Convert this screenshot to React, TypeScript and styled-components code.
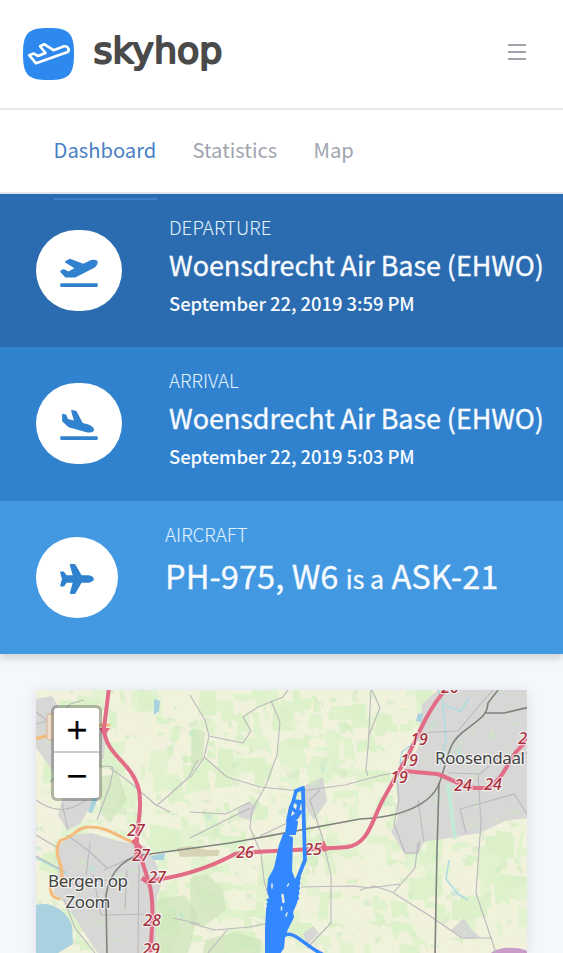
import React from "react";
import styled, { createGlobalStyle } from "styled-components";
import { FaPlane, FaPlaneArrival, FaPlaneDeparture } from "react-icons/fa";

const GlobalStyle = createGlobalStyle`
  * { box-sizing: border-box; }
  html, body { margin: 0; padding: 0; }
  body {
    background: #f4f7fc;
    font-family: "Noto Sans CJK SC", "Noto Sans", sans-serif;
    overflow: hidden;
  }
`;

const Page = styled.div`
  display: flex;
  flex-direction: column;
  height: 953px;
  overflow: hidden;
`;

const Header = styled.header`
  display: flex;
  flex: none;
  align-items: center;
  justify-content: space-between;
  height: 110px;
  padding: 0 37px 0 23px;
  background: #fff;
  border-bottom: 2px solid #e4e9f0;
`;

const Brand = styled.a`
  display: flex;
  svg { display: block; overflow: visible; }
`;

const MenuButton = styled.button`
  display: flex;
  flex-direction: column;
  gap: 5px;
  width: 18px;
  padding: 0;
  margin-top: -4px;
  border: 0;
  background: none;
`;

const MenuBar = styled.span`
  height: 2px;
  background: #9fa4ad;
`;

const Tabs = styled.nav`
  position: relative;
  display: flex;
  flex: none;
  gap: 36px;
  height: 84px;
  padding: 0 54px;
  background: #fff;
  border-bottom: 2px solid #dfe6ef;
  z-index: 1;
`;

const Tab = styled.a<{ $active?: boolean; $width: number }>`
  flex: none;
  width: ${(p) => p.$width}px;
  height: 90px;
  padding-top: 24px;
  font-size: 20.2px;
  line-height: 32px;
  white-space: nowrap;
  text-indent: -0.5px;
  color: ${(p) => (p.$active ? "#4a80c6" : "#a0a5af")};
  border-bottom: 2px solid ${(p) => (p.$active ? "#427fcd" : "transparent")};
`;

const Summary = styled.section`
  flex: none;
  box-shadow: 0 4px 8px rgba(0, 0, 0, 0.16);
`;

const Leg = styled.article<{ $bg: string; $h: number }>`
  display: flex;
  gap: 47px;
  height: ${(p) => p.$h}px;
  padding-left: 36px;
  background: ${(p) => p.$bg};
`;

const IconDisc = styled.div<{ $w: number; $icon: number }>`
  display: flex;
  flex: none;
  align-items: center;
  justify-content: center;
  width: ${(p) => p.$w}px;
  height: 81px;
  margin-top: 36px;
  padding-top: 2px;
  border-radius: 999px;
  background: #fff;
  color: #3182ce;
  svg { display: block; flex: none; height: 30px; width: ${(p) => p.$icon}px; }
`;

const Details = styled.div`
  display: flex;
  flex-direction: column;
  padding-top: 19px;
  color: #f7fbff;
  white-space: nowrap;
`;

const Kicker = styled.div`
  font-size: 18.8px;
  font-weight: 300;
  line-height: 28px;
  color: #e3f3ff;
`;

const Place = styled.div`
  font-size: 27px;
  line-height: 36px;
  margin-top: 6px;
  letter-spacing: -0.07px;
  -webkit-text-stroke: 0.35px currentColor;
`;

const When = styled.div`
  font-size: 18.5px;
  font-weight: 500;
  line-height: 28px;
  margin-top: 6px;
  letter-spacing: -0.07px;
`;

const Craft = styled.div`
  font-size: 32.7px;
  line-height: 48px;
  margin-top: 3px;
  -webkit-text-stroke: 0.3px currentColor;
  small { font-size: 25px; }
`;

const MapCard = styled.section`
  position: relative;
  flex: none;
  width: 491px;
  height: 263px;
  margin: 36px 0 0 36px;
  box-shadow: 0 2px 14px rgba(0, 0, 0, 0.1);
  svg { display: block; }
`;

const ZoomControl = styled.div`
  position: absolute;
  left: 15px;
  top: 15px;
  width: 51px;
  border: 3px solid rgba(0, 0, 0, 0.25);
  border-radius: 6px;
  background: #fff;
  background-clip: padding-box;
`;

const ZoomButton = styled.button`
  display: block;
  width: 45px;
  height: 45px;
  padding: 0 0 0 1px;
  border: 0;
  background: none;
  color: #000;
  font: 28px/43px "DejaVu Sans", sans-serif;
  text-align: center;
  -webkit-text-stroke: 0.3px #000;
  &:first-child { border-bottom: 2px solid #ccc; }
`;

const Logo = () => (
  <svg width="204" height="60" viewBox="23 24 204 60">
    <path d="M48.5 28C69 28 74 33 74 54S69 80 48.500 80 23 75 23 54 28 28 48.500 28Z" fill="#2e89ef" />
    <path
      d="M29.200 55.200L33.800 53.600L38 56L45.500 53L40 46.300L44.500 44.300L53.500 50.200L64 46.300C68 45.500 70.500 50.500 67 52.300L36 63.300Z"
      fill="none"
      stroke="#fff"
      strokeWidth="2.600"
      strokeLinejoin="round"
    />
    <text
      x="93.500"
      y="63"
      textLength="129"
      lengthAdjust="spacingAndGlyphs"
      fontFamily="DejaVu Sans, sans-serif"
      fontSize="35"
      fill="#4a4a4a"
      stroke="#4a4a4a"
      strokeWidth="2"
      strokeLinejoin="round"
    >
      skyhop
    </text>
  </svg>
);

const random = (seed: number) => () => {
  seed = (seed * 16807) % 2147483647;
  return seed / 2147483647;
};

const fieldColors = ["#dcf3ca", "#e0f3ce", "#daf0c8", "#f0f2dc", "#e2f3d0", "#f3f1de"];

const makeParcels = (count: number, seed: number, size: number) => {
  const next = random(seed);
  return Array.from({ length: count }, () => {
    const x = 30 + next() * 491;
    const y = 682 + next() * 263;
    const w = 3 + next() * size;
    const h = 3 + next() * size * 0.9;
    const s = next() * 8 - 2;
    return {
      d: `M${x} ${y}l${w} ${s}l${s} ${h}l${-w * 0.5} ${-s * 1.5}l${-w * 0.6} ${s}Z`,
      fill: fieldColors[Math.floor(next() * fieldColors.length)],
    };
  });
};

const parcels = makeParcels(620, 4127, 24);
const parks = makeParcels(170, 917, 5);

const urban = [
  "M36 699L52 696L64 716L88 728L106 733L104 757L95 772L84 785L94 800L80 824L67 830L58 815L66 788L36 748Z",
  "M57 848L70 835L92 833L114 840L145 846L156 863L162 881L156 900L156 953L98 953L80 926L65 903L53 893L58 872Z",
  "M422 704L438 690L527 690L527 818L505 821L480 833L424 842L418 854L404 853L391 832L398 818L397 782L407 765L418 748Z",
  "M300 788L323 777L327 801L314 820L304 805Z",
  "M238 810L249 802L257 806L250 820L239 817Z",
  "M303 934L313 926L319 933L307 945Z",
  "M451 930L464 918L470 928L480 937L466 939Z",
];

const water = [
  "M36 905C50 901 67 910 72 926L73 944L58 953L36 953Z",
  "M154 699L160 701L159 711L154 715Z",
  "M88 812L94 795L98 798L92 813Z",
  "M418 713L423 714L421 722L416 721Z",
  "M151 856L165 853L164 860L153 860Z",
  "M60 780L67 775L67 784L61 785Z",
];

const woods = [
  "M190 878L207 874L223 889L226 910L202 928L190 920Z",
  "M154 900L185 895L198 915L188 953L157 953Z",
  "M205 940L235 932L262 940L260 953L203 953Z",
  "M192 728L205 732L203 760L191 770Z",
  "M101 777L118 773L127 800L110 823L100 813Z",
];

const lanes = [
  "M36 712L60 730M68 830L62 803M36 835L58 848M36 800C50 810 66 815 86 800",
  "M100 767C120 764 112 770 110 785L97 820M110 768L127 780L156 805L170 812M156 806L168 796L188 778L198 760",
  "M190 695L205 720L209 736L204 758L190 778M209 736L243 743L251 731L243 717L258 707L283 697L288 690",
  "M271 701L280 722L277 755L266 785L252 810L250 828L261 853L264 880L268 895",
  "M204 757L227 777L260 787L300 791L345 785L378 776L410 770",
  "M190 812L226 814L250 802M190 838L250 808M260 836L300 817",
  "M320 790L310 800L322 836L331 875L331 923L307 948M301 887L354 886L370 888L400 884",
  "M190 923L215 930L250 927L268 923M227 930L208 953",
  "M360 890L374 886L392 892L430 916L462 938L492 938",
  "M394 892L415 868L418 842M478 773L481 822L476 893L485 920L496 953",
  "M372 690L380 708L369 735L366 770L368 776M368 750L371 690",
  "M397 780L399 800L394 824L405 853L418 853L420 841",
  "M420 733L458 731L484 700L493 690M449 773L480 774L498 758L527 753",
  "M460 809L514 794L527 814M460 809L466 833M418 800L424 842",
  "M104 870L135 856M67 835L90 852L107 868M93 875L101 915L154 914M64 900L75 928L95 953",
  "M139 864L138 953M90 843L86 875M70 885L107 880M127 870L125 910M36 856L65 872",
  "M173 918L200 924M36 724L58 718L70 704L84 700M50 782L66 768L102 765",
];

const motorway = [
  "M109 688L104 728C105 756 132 761 139 790C143 812 136 826 137 843C141 860 146 872 148 880C154 895 153 920 150 956",
  "M147 881C183 877 209 868 235 854C250 851 325 849 347 847C370 844 372 818 385 796L403 764C416 744 423 714 448 687",
  "M404 771L437 774C448 777 462 787 475 788L488 788C502 780 506 766 516 752L530 737",
];

const railways = [
  "M107 956L106 895C110 870 126 855 150 854L230 843L360 819C405 817 431 803 439 784C449 758 446 743 467 729C482 717 487 715 488 703L498 690",
  "M484 713L504 713L530 707M439 783L437 850L435 956",
];

const exits = [
  { x: 136, y: 836, t: "27" }, { x: 141, y: 861, t: "27" }, { x: 157, y: 883, t: "27" },
  { x: 152, y: 926, t: "28" }, { x: 151, y: 955, t: "29" }, { x: 245, y: 858, t: "26" },
  { x: 313, y: 855, t: "25" }, { x: 419, y: 745, t: "19" }, { x: 409, y: 766, t: "19" },
  { x: 399, y: 783, t: "19" }, { x: 463, y: 791, t: "24" }, { x: 493, y: 790, t: "24" },
  { x: 527, y: 744, t: "23" }, { x: 450, y: 693, t: "20" },
];

const MapLabel = styled.text`
  font-family: "Noto Sans", sans-serif;
  font-size: 17px;
  fill: #444;
  stroke: rgba(255, 255, 255, 0.65);
  stroke-width: 2.5px;
  stroke-linejoin: round;
  paint-order: stroke;
  text-anchor: middle;
`;

const ExitLabel = styled(MapLabel)`
  font-size: 16px;
  font-style: italic;
  font-weight: 500;
  fill: #a8323d;
`;

const FlightMap = () => (
  <svg width="491" height="263" viewBox="36 690 491 263">
    <rect x="36" y="690" width="491" height="263" fill="#f0f2dc" />
    <g opacity="0.9">
      {parcels.map((p, i) => <path key={i} d={p.d} fill={p.fill} />)}
    </g>
    {woods.map((d) => <path key={d} d={d} fill="#c9e4b9" opacity="0.65" />)}
    {urban.map((d) => <path key={d} d={d} fill="#d7d7d5" />)}
    <g opacity="0.5">
      {parks.map((p, i) => <path key={i} d={p.d} fill={i % 11 === 0 ? "#b8e4d2" : "#cfeac4"} />)}
    </g>
    {water.map((d) => <path key={d} d={d} fill="#a9d1df" />)}
    <path d="M177 848L190 846L208 850L220 850L218 856L180 857Z" fill="#d6d4b5" />
    <path d="M491 953C500 946 518 947 527 951V953Z" fill="#c99bc8" />
    <g fill="none" stroke="#addce3" strokeWidth="1.500">
      <path d="M438 690L444 706L461 711L469 698M443 706L446 740L440 765M400 765L402 752L425 735" />
      <path d="M36 858L68 874M449 860L446 879L458 894L468 900" />
    </g>
    <path d="M448 784L455 839" fill="none" stroke="#c3ead7" strokeWidth="4" />
    <g fill="none" stroke="#bcb9bd" strokeWidth="1.100" strokeLinejoin="round">
      {lanes.map((d) => <path key={d} d={d} />)}
    </g>
    <g fill="none" stroke="#7f837e" strokeWidth="1.600">
      {railways.map((d) => <path key={d} d={d} />)}
    </g>
    <g fill="none" stroke="#f3bc7d" strokeWidth="3.200" strokeLinecap="round" strokeLinejoin="round">
      <path d="M35 739L50 735M135 843C116 836 108 827 90 827C75 827 77 836 61 840C54 848 58 858 61 866L63 885M50 887C51 896 54 898 59 899M100 725H109" />
    </g>
    <rect x="47" y="714" width="18" height="26" rx="2" fill="#eeddc8" stroke="#d7b59a" />
    <g fill="none" stroke="#e26b86" strokeWidth="4" strokeLinejoin="round">
      {motorway.map((d) => <path key={d} d={d} />)}
      <path d="M133 840L141 849M137 846V858M322 842L326 851M142 878L151 884" strokeWidth="5" />
    </g>
    <path d="M99 728L110 728L104 737Z" fill="#e26b86" />
    {exits.map((s) => <ExitLabel key={`${s.x}-${s.y}`} x={s.x} y={s.y}>{s.t}</ExitLabel>)}
    <MapLabel x="480" y="764" textLength="90">Roosendaal</MapLabel>
    <MapLabel x="88" y="887" textLength="80">Bergen op</MapLabel>
    <MapLabel x="88" y="908" textLength="45">Zoom</MapLabel>
    <g fill="#3388ff" stroke="#3388ff" strokeLinejoin="round" strokeLinecap="round">
      <path d="M296 791L303 788L304 828L305 860L297 880" fill="none" strokeWidth="3.800" />
      <path d="M296 791L293 802L291 807L297 813L299 804L295 801L302 802" fill="none" strokeWidth="3.500" />
      <path d="M291 807L288 821L300 812L296 818" fill="none" strokeWidth="4" />
      <path
        strokeWidth="2"
        d="M288 819L293 820L297 822L295 834L286 834ZM284 834L292 838L291 871L294 879L299 880L298 891L296 903L292 912L293 917L287 929L284 938L283 948L278 955H266L266 928L267 910L270 898L268 890L269 879L275 868L280 845Z"
      />
      <path d="M285 935C296 931 304 946 324 955" fill="none" strokeWidth="3.500" />
      <path d="M268 900L267 945" fill="none" strokeWidth="3" strokeDasharray="0.1 4" />
      <path d="M299 878L297 899" fill="none" strokeWidth="4" strokeDasharray="0.1 5" />
    </g>
    <g fill="none" stroke="#e4eee4" strokeLinecap="round">
      <path d="M282.500 895L283.500 902" strokeWidth="2.500" />
      <path d="M287.500 886L288.500 884M287 913L286 916M272 884L272 888M281.500 907V910" strokeWidth="1.500" />
    </g>
  </svg>
);

export default function App() {
  return (
    <Page>
      <GlobalStyle />
      <Header>
        <Brand aria-label="skyhop"><Logo /></Brand>
        <MenuButton aria-label="Menu"><MenuBar /><MenuBar /><MenuBar /></MenuButton>
      </Header>
      <Tabs>
        <Tab $active $width={103}>Dashboard</Tab>
        <Tab $width={85}>Statistics</Tab>
        <Tab $width={40}>Map</Tab>
      </Tabs>
      <Summary>
        <Leg $bg="#2b6cb0" $h={153}>
          <IconDisc $w={86} $icon={38}><FaPlaneDeparture /></IconDisc>
          <Details>
            <Kicker>DEPARTURE</Kicker>
            <Place>Woensdrecht Air Base (EHWO)</Place>
            <When>September 22, 2019 3:59 PM</When>
          </Details>
        </Leg>
        <Leg $bg="#3182ce" $h={154}>
          <IconDisc $w={86} $icon={38}><FaPlaneArrival /></IconDisc>
          <Details>
            <Kicker>ARRIVAL</Kicker>
            <Place>Woensdrecht Air Base (EHWO)</Place>
            <When>September 22, 2019 5:03 PM</When>
          </Details>
        </Leg>
        <Leg $bg="#4299e1" $h={153}>
          <IconDisc $w={82} $icon={34}><FaPlane /></IconDisc>
          <Details>
            <Kicker>AIRCRAFT</Kicker>
            <Craft>PH-975, W6 <small>is a</small> ASK-21</Craft>
          </Details>
        </Leg>
      </Summary>
      <MapCard>
        <FlightMap />
        <ZoomControl>
          <ZoomButton aria-label="Zoom in">+</ZoomButton>
          <ZoomButton aria-label="Zoom out">−</ZoomButton>
        </ZoomControl>
      </MapCard>
    </Page>
  );
}
